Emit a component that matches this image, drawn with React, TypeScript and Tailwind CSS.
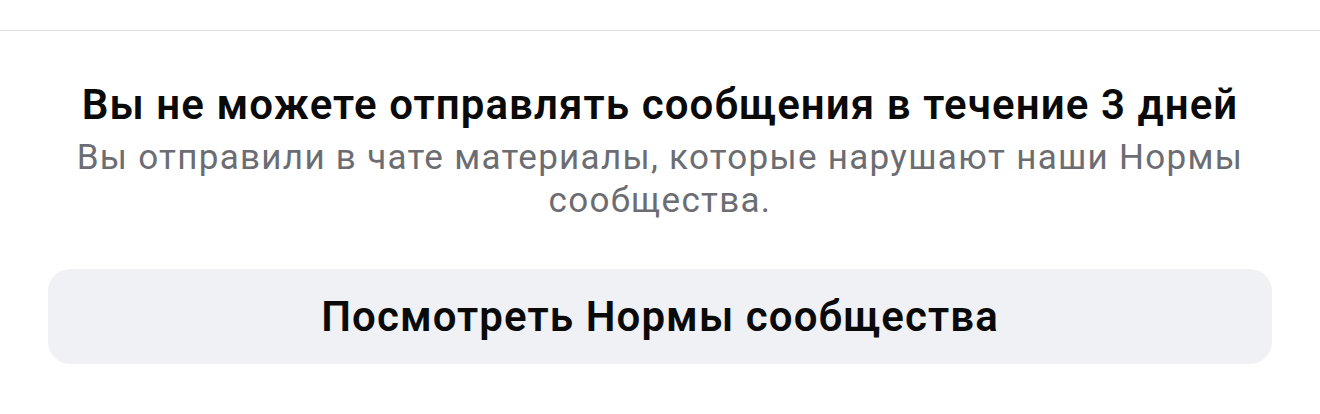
import React from "react";

export default function App() {
  return (
    <div
      className="w-[1320px] h-[414px] bg-white flex flex-col overflow-hidden"
      style={{ fontFamily: "Roboto, 'Noto Sans', sans-serif" }}
    >
      <div className="h-[30px]" />
      <div className="h-px bg-[#e0e0e2]" />
      <div className="flex flex-col items-center px-[48px]">
        <h1 className="mt-[49px] text-[42px] leading-[50px] font-semibold text-[#0a0a0a] text-center tracking-[1.1px] whitespace-nowrap">
          Вы не можете отправлять сообщения в течение 3 дней
        </h1>
        <p className="mt-[6px] text-[35px] leading-[43px] text-[#6b6d72] text-center tracking-[1.3px] max-w-[1200px]">
          Вы отправили в чате материалы, которые нарушают наши Нормы сообщества.
        </p>
        <button className="mt-[47px] w-full h-[95px] rounded-[22px] bg-[#f0f1f4] flex items-center justify-center text-[42px] font-semibold text-[#0a0a0a] tracking-[1.1px]">
          Посмотреть Нормы сообщества
        </button>
      </div>
    </div>
  );
}
